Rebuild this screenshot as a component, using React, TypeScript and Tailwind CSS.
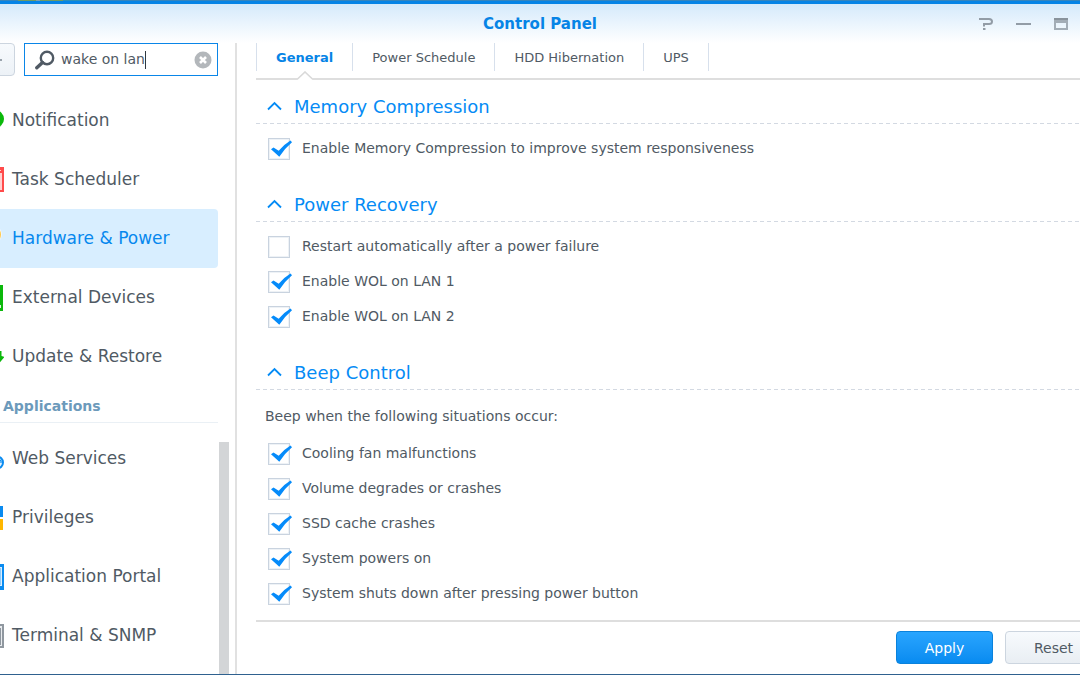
import { useState } from "react";
import type { ReactNode } from "react";

type NavItem = { label: string; icon: ReactNode; active?: boolean };
type Option = { label: string; checked: boolean };

const Bell = (
  <svg viewBox="0 0 32 32" className="size-8">
    <circle cx="23" cy="14" r="9" fill="#0bb80b" />
  </svg>
);
const Calendar = (
  <svg viewBox="0 0 32 32" className="size-8">
    <path d="M2 3H32V28H2Z" fill="#ff4b4b" />
    <path d="M5 9H30V26H5Z" fill="#ffd0d0" />
    <path d="M5 6H29V7H5Z" fill="#ffd0d0" />
  </svg>
);
const Bulb = (
  <svg viewBox="0 0 32 32" className="size-8">
    <circle cx="19" cy="11.5" r="10.5" fill="#fff" />
    <circle cx="20" cy="11.5" r="9" fill="#ffc94d" />
  </svg>
);
const Drive = (
  <svg viewBox="0 0 32 32" className="size-8">
    <path d="M4 3H31V29H4Z" fill="#0bb80b" />
    <path d="M27 23H29V26H27Z" fill="#d9f7d9" />
  </svg>
);
const Refresh = (
  <svg viewBox="0 0 32 32" className="size-8">
    <path d="M5 16A11 11 0 0 1 25 10" fill="none" stroke="#0bb80b" strokeWidth="4" />
    <path d="M24 10H29.5V15L32.5 16L27 22.5L21 16H24Z" fill="#0bb80b" />
  </svg>
);
const Globe = (
  <svg viewBox="0 0 32 32" className="size-8">
    <circle cx="25" cy="19.5" r="6" fill="#e3f2ff" stroke="#0a8bf0" strokeWidth="2" />
    <path d="M26 15L29 18L29 20" fill="none" stroke="#0a8bf0" strokeWidth="1.2" />
  </svg>
);
const Shield = (
  <svg viewBox="0 0 32 32" className="size-8">
    <path d="M18 4H31V15H18Z" fill="#0a8bf0" />
    <path d="M18 17H31V28H18Z" fill="#ffb700" />
  </svg>
);
const Portal = (
  <svg viewBox="0 0 32 32" className="size-8">
    <path d="M2 3H32V29H2Z" fill="#0a8bf0" />
    <path d="M5 6H30V25H5Z" fill="#d8eeff" />
    <path d="M6 7H29V24H6Z" fill="#8fcbfa" />
  </svg>
);
const Terminal = (
  <svg viewBox="0 0 32 32" className="size-8">
    <path d="M2 4H32V28H2Z" fill="#8f979f" />
    <path d="M4 6H30V26H4Z" fill="#e8ebee" />
    <path d="M6 8H29V25H6Z" fill="#8f979f" />
  </svg>
);

const systemItems: NavItem[] = [
  { label: "Notification", icon: Bell },
  { label: "Task Scheduler", icon: Calendar },
  { label: "Hardware & Power", icon: Bulb, active: true },
  { label: "External Devices", icon: Drive },
  { label: "Update & Restore", icon: Refresh },
];
const applicationItems: NavItem[] = [
  { label: "Web Services", icon: Globe },
  { label: "Privileges", icon: Shield },
  { label: "Application Portal", icon: Portal },
  { label: "Terminal & SNMP", icon: Terminal },
];

function NavList({ items }: { items: NavItem[] }) {
  return (
    <ul className="-ml-7">
      {items.map((item) => (
        <li key={item.label}>
          <a
            href="#"
            aria-current={item.active ? "page" : undefined}
            className={
              item.active
                ? "flex h-[59px] items-center gap-2 rounded bg-[#d8eeff] text-[17px] text-[#0688ee]"
                : "flex h-[59px] items-center gap-2 rounded text-[17px] text-[#505a64]"
            }
          >
            <span className="shrink-0">{item.icon}</span>
            <span className="whitespace-nowrap">{item.label}</span>
          </a>
        </li>
      ))}
    </ul>
  );
}

function CheckRow({ label, checked }: Option) {
  const [on, setOn] = useState(checked);
  return (
    <label className="flex h-[35px] items-center gap-3 pl-3 text-[14px] text-[#505a64]">
      <span className="relative size-[22px] shrink-0">
        <input
          type="checkbox"
          checked={on}
          onChange={(e) => setOn(e.target.checked)}
          className="block size-[22px] appearance-none border border-[#c9d3df] bg-white shadow-[inset_0_0_0_1px_#eef2f6]"
        />
        {on && (
          <svg viewBox="0 0 26 22" className="pointer-events-none absolute top-0 left-0 h-[22px] w-[26px]">
            <path d="M3 11.2L5.5 9.4L10.7 12.8Q16 6.5 22.5 2.6L24 4.2Q17 10 11.3 18.8Z" fill="#058bfa" />
          </svg>
        )}
      </span>
      {label}
    </label>
  );
}

function Section({ title, note, options }: { title: string; note?: string; options: Option[] }) {
  return (
    <section className="mb-[21px]">
      <h2 className="text-[18px] text-[#058bf5]">
        <button type="button" className="flex h-[34px] w-full items-center gap-3 pl-[11px]">
          <svg viewBox="0 0 15 10" className="h-[10px] w-[15px]">
            <path d="M1 8.5L7.5 2L14 8.5" fill="none" stroke="currentColor" strokeWidth="1.8" />
          </svg>
          {title}
        </button>
      </h2>
      <div className="mb-[7px] h-px bg-[repeating-linear-gradient(90deg,#d3d9e2_0_4px,transparent_4px_7px)]" />
      {note && <p className="flex h-[39px] items-center pl-[9px] text-[14px] text-[#505a64]">{note}</p>}
      {options.map((o) => (
        <CheckRow key={o.label} {...o} />
      ))}
    </section>
  );
}

const tabs = ["General", "Power Schedule", "HDD Hibernation", "UPS"];

export default function App() {
  const [query, setQuery] = useState("wake on lan");
  return (
    <div className="flex h-screen flex-col overflow-hidden border-b border-[#2f618f] bg-white font-['Verdana','DejaVu_Sans',sans-serif]">
      <div className="flex h-1 shrink-0 flex-col bg-[#0684e6]">
        <div className="h-px bg-[#3585bd]">
          <div className="ml-[18px] h-px w-[68px] bg-[linear-gradient(90deg,#6f9b63_0_18px,#7e9fae_18px_22px,#6f9b63_22px_45px,#2b8fb8_45px)]" />
        </div>
      </div>
      <header className="grid h-[39px] shrink-0 grid-cols-[1fr_auto_1fr] items-center bg-linear-to-b from-[#d5eafb] to-white">
        <h1 className="col-start-2 pt-0.5 text-[15px] font-bold text-[#0684e6]">Control Panel</h1>
        <div className="flex items-center justify-end gap-[23px] pr-3 text-[#929ca6]">
          <button type="button" aria-label="Help">
            <svg viewBox="0 0 14 12" className="h-3 w-[14px]">
              <path d="M0 1H10Q13 1 13 3.5Q13 6 10 6H5V8.5" fill="none" stroke="currentColor" strokeWidth="2" />
              <path d="M4 10H6.5V12H4Z" fill="currentColor" />
            </svg>
          </button>
          <button type="button" aria-label="Minimize">
            <svg viewBox="0 0 15 12" className="h-3 w-[15px]">
              <path d="M0 5H15V7H0Z" fill="currentColor" />
            </svg>
          </button>
          <button type="button" aria-label="Maximize">
            <svg viewBox="0 0 14 12" className="h-3 w-[14px]">
              <path d="M0 0H14V12H0ZM2 5V10H12V5Z" fill="#a3adb6" fillRule="evenodd" />
              <path d="M0 0H14V2H0Z" fill="#89939c" />
            </svg>
          </button>
        </div>
      </header>

      <div className="flex min-h-0 flex-1">
        <aside className="flex w-[237px] shrink-0 flex-col overflow-hidden border-r-2 border-[#e1e1e1]">
          <div className="flex shrink-0 items-center gap-[9px] pr-[17px]">
            <button
              type="button"
              aria-label="Back"
              className="-ml-[18px] flex h-[33px] w-[33px] shrink-0 items-center justify-center rounded border border-[#ccd5df] bg-linear-to-b from-[#f7fafd] to-[#edf2f7]"
            >
              <svg viewBox="0 0 6 2" className="h-0.5 w-1.5">
                <path d="M0 0H6V2H0Z" fill="#9aa3ac" />
              </svg>
            </button>
            <div className="flex h-[33px] min-w-0 flex-1 items-center border border-[#0a86e8] pr-[5px] pl-[10px]">
              <svg viewBox="0 0 20 20" className="size-5 shrink-0">
                <circle cx="12" cy="8" r="6.2" fill="none" stroke="#505a64" strokeWidth="2.4" />
                <path d="M7.5 12.5L1.8 17.8" stroke="#505a64" strokeWidth="3.4" strokeLinecap="round" />
              </svg>
              <div className="relative ml-1.5 flex min-w-0 flex-1 items-center">
                <input
                  aria-label="Search"
                  value={query}
                  onChange={(e) => setQuery(e.target.value)}
                  className="w-full min-w-0 bg-transparent text-[14px] text-[#505a64] caret-transparent outline-none"
                />
                <span className="pointer-events-none absolute inset-y-0 left-0 flex items-center text-[14px] whitespace-pre" aria-hidden="true">
                  <span className="invisible">{query}</span>
                  <span className="h-[18px] w-px bg-[#303840]" />
                </span>
              </div>
              <button type="button" aria-label="Clear search" onClick={() => setQuery("")}>
                <svg viewBox="0 0 18 18" className="size-[18px]">
                  <circle cx="9" cy="9" r="8.5" fill="#b3b7bb" />
                  <path d="M6 6L12 12M12 6L6 12" stroke="#fff" strokeWidth="2.6" />
                </svg>
              </button>
            </div>
          </div>
          <nav className="mt-[15px] flex min-h-0 flex-1">
            <div className="min-w-0 flex-1 overflow-hidden">
              <NavList items={systemItems} />
              <h2 className="mb-1.5 flex h-[37px] items-center border-b border-[#eaf0f5] pt-1 pl-[3px] text-[14px] font-bold text-[#6c9abb]">
                Applications
              </h2>
              <NavList items={applicationItems} />
            </div>
            <div className="flex w-[17px] shrink-0 flex-col pl-px">
              <div className="flex-1 basis-0" />
              <div className="h-[232px] w-[10px] bg-[#d3d5d7]" />
            </div>
          </nav>
        </aside>

        <main className="ml-[19px] flex min-w-0 flex-1 flex-col">
          <div role="tablist" className="flex h-7 shrink-0 border-l border-[#d7e0ec] text-[13px] text-[#505a64]">
            {tabs.map((tab, i) => (
              <button
                key={tab}
                type="button"
                role="tab"
                aria-selected={i === 0}
                className={
                  i === 0
                    ? "relative border-r border-[#d7e0ec] px-[19px] pt-0.5 font-bold text-[#0684e6]"
                    : "border-r border-[#d7e0ec] px-[19px] pt-0.5"
                }
              >
                {tab}
                {i === 0 && (
                  <svg viewBox="0 0 16 10" className="absolute top-[28px] left-1/2 z-10 h-[10px] w-4 -translate-x-1/2">
                    <path d="M0 10V8L8 1L16 8V10Z" fill="#fff" />
                    <path d="M0 8.5L8 1L16 8.5" fill="none" stroke="#d9d9d9" strokeWidth="1.6" />
                  </svg>
                )}
              </button>
            ))}
          </div>
          <div className="mt-[7px] h-0.5 shrink-0 bg-[#dedede]" />

          <div className="min-h-0 flex-1 overflow-hidden pt-[9px]">
            <Section
              title="Memory Compression"
              options={[{ label: "Enable Memory Compression to improve system responsiveness", checked: true }]}
            />
            <Section
              title="Power Recovery"
              options={[
                { label: "Restart automatically after a power failure", checked: false },
                { label: "Enable WOL on LAN 1", checked: true },
                { label: "Enable WOL on LAN 2", checked: true },
              ]}
            />
            <Section
              title="Beep Control"
              note="Beep when the following situations occur:"
              options={[
                { label: "Cooling fan malfunctions", checked: true },
                { label: "Volume degrades or crashes", checked: true },
                { label: "SSD cache crashes", checked: true },
                { label: "System powers on", checked: true },
                { label: "System shuts down after pressing power button", checked: true },
              ]}
            />
          </div>

          <footer className="flex h-[54px] shrink-0 justify-end gap-3 border-t-2 border-[#dedede] pt-[9px] text-[14px]">
            <button
              type="button"
              className="h-[33px] w-[97px] rounded border border-[#0a82dc] bg-linear-to-b from-[#28a5ff] to-[#078bf0] pt-0.5 text-white"
            >
              Apply
            </button>
            <button
              type="button"
              className="-mr-[22px] h-[33px] w-[97px] shrink-0 rounded border border-[#ccd5df] bg-linear-to-b from-[#f7fafd] to-[#e9eef3] pt-0.5 text-[#505a64]"
            >
              Reset
            </button>
          </footer>
        </main>
      </div>
    </div>
  );
}
